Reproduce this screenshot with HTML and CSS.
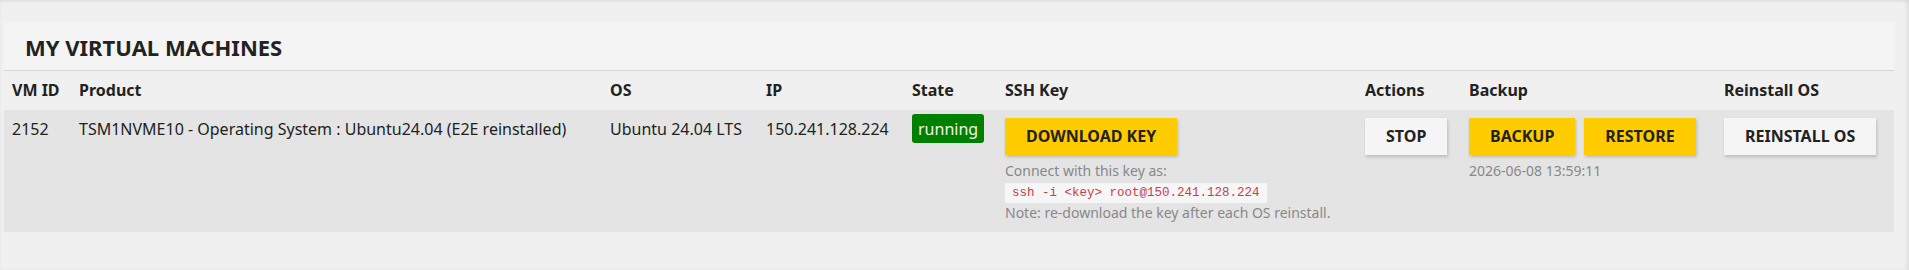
FILE: index.html
```html
<!DOCTYPE html>
<html lang="en">
<head>
    <meta charset="UTF-8">
    <meta name="viewport" content="width=device-width, initial-scale=1.0">
    <title>My Virtual Machines</title>

    <link rel="stylesheet" href="styles.css">
</head>
<body>
    <div class="page">
        <div class="panel">
            <h2 class="panel-title">My Virtual Machines</h2>

            <table class="vms">
                <colgroup>
                    <col class="c-id">
                    <col class="c-product">
                    <col class="c-os">
                    <col class="c-ip">
                    <col class="c-state">
                    <col class="c-ssh">
                    <col class="c-actions">
                    <col class="c-backup">
                    <col class="c-reinstall">
                </colgroup>
                <thead>
                    <tr>
                        <th>VM ID</th>
                        <th>Product</th>
                        <th>OS</th>
                        <th>IP</th>
                        <th>State</th>
                        <th>SSH Key</th>
                        <th>Actions</th>
                        <th>Backup</th>
                        <th>Reinstall OS</th>
                    </tr>
                </thead>
                <tbody>
                    <tr>
                        <td>2152</td>
                        <td>TSM1NVME10 - Operating System : Ubuntu24.04 (E2E reinstalled)</td>
                        <td>Ubuntu 24.04 LTS</td>
                        <td>150.241.128.224</td>
                        <td><span class="badge running">running</span></td>
                        <td>
                            <button class="btn yellow">Download Key</button>
                            <div class="hint">
                                <div>Connect with this key as:</div>
                                <code>ssh -i &lt;key&gt; root@150.241.128.224</code>
                                <div>Note: re-download the key after each OS reinstall.</div>
                            </div>
                        </td>
                        <td><button class="btn">Stop</button></td>
                        <td>
                            <div class="btn-group">
                                <button class="btn yellow">Backup</button>
                                <button class="btn yellow">Restore</button>
                            </div>
                            <div class="hint">2026-06-08 13:59:11</div>
                        </td>
                        <td><button class="btn">Reinstall OS</button></td>
                    </tr>
                </tbody>
            </table>
        </div>
    </div>
</body>
</html>
```
FILE: styles.css
```css
:root {
    --pagebg: #f0f0f0;
    --headbg: #f4f4f4;
    --rowbg: #e4e4e4;
    --text: #222;
    --muted: #888;
    --yellow: #ffcc00;
}

* {
    margin: 0;
    padding: 0;
    box-sizing: border-box;
}

html {
    background-color: var(--pagebg);
}

body {
    font-family: "Noto Sans", sans-serif;
    font-size: 16px;
    color: var(--text);
    min-height: 100vh;
    box-shadow: inset 0 2px 3px rgba(0, 0, 0, 0.05), inset -3px 0 3px rgba(0, 0, 0, 0.05);
}

.page {
    padding: 22px 15px 30px 4px;
}

.panel-title {
    background-color: var(--headbg);
    font-size: 22px;
    font-weight: bold;
    text-transform: uppercase;
    padding: 10px 21px 8px;
    border-bottom: 1px solid #d6d6d6;
}

.vms {
    width: 100%;
    border-collapse: collapse;
    table-layout: fixed;
}

.c-id { width: 67px; }
.c-product { width: 531px; }
.c-os { width: 156px; }
.c-ip { width: 146px; }
.c-state { width: 93px; }
.c-ssh { width: 360px; }
.c-actions { width: 104px; }
.c-backup { width: 255px; }
.c-reinstall { width: 178px; }

.vms th {
    text-align: left;
    font-weight: bold;
    padding: 8px 8px 9px;
    background-color: var(--pagebg);
}

.vms td {
    vertical-align: top;
    padding: 8px 8px 10px;
    background-color: var(--rowbg);
}

.badge {
    display: inline-block;
    margin-top: -4px;
    padding: 4px 6px 3px;
    border-radius: 3px;
}
.badge.running {
    background-color: #008000;
    color: #f2f2f2;
}

.btn {
    display: inline-block;
    border: none;
    font-family: inherit;
    font-size: 16px;
    font-weight: bold;
    line-height: 21px;
    color: var(--text);
    text-transform: uppercase;
    padding: 8px 21px;
    background-color: #f5f5f5;
    box-shadow: 1px 2px 3px rgba(0, 0, 0, 0.18);
    cursor: pointer;
}
.btn.yellow {
    background-color: var(--yellow);
}

.btn-group {
    display: flex;
    gap: 9px;
}

.hint {
    margin-top: 6px;
    font-size: 14px;
    color: var(--muted);
}

.hint code {
    display: block;
    width: fit-content;
    margin-top: 3px;
    padding: 3px 7px;
    font-family: "Liberation Mono", monospace;
    font-size: 12.5px;
    line-height: 14px;
    color: #c9404a;
    background-color: #f6f6f6;
}
```
